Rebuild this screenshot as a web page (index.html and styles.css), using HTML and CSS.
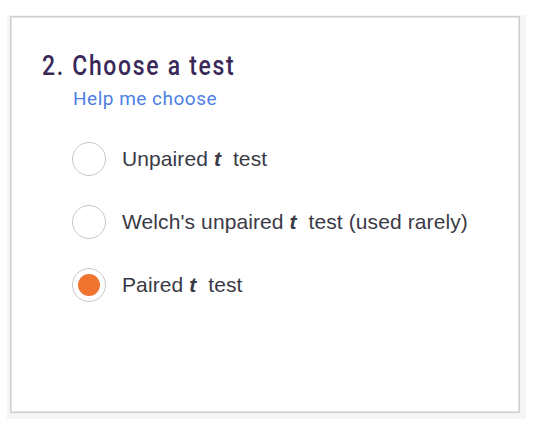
FILE: index.html
```html
<!DOCTYPE html>
<html>
<head>
<meta charset="utf-8">
<title>Choose a test</title>
<link rel="stylesheet" href="styles.css">
</head>
<body>
<div class="frame">
    <div class="card">
        <h2 class="titulo"><span>2. Choose a test</span></h2>
        <a class="ayuda" href="#">Help me choose</a>
        <div class="opciones">
            <label class="opcion">
                <input type="radio" name="test" value="unpaired">
                <span class="circulo"></span>
                <span class="texto">Unpaired <i>t</i>&nbsp; test</span>
            </label>
            <label class="opcion">
                <input type="radio" name="test" value="welch">
                <span class="circulo"></span>
                <span class="texto">Welch's unpaired <i>t</i>&nbsp; test (used rarely)</span>
            </label>
            <label class="opcion">
                <input type="radio" name="test" value="paired" checked>
                <span class="circulo"></span>
                <span class="texto">Paired <i>t</i>&nbsp; test</span>
            </label>
        </div>
    </div>
</div>
</body>
</html>
```

FILE: styles.css
```css
body{
    margin: 0;
    background: #ffffff;
    padding: 15px 12px 5px 7px;
}
.frame{
    background: #f5f5f5;
    padding: 1px 6px 6px 3px;
}
.card{
    background: #ffffff;
    border: 1px solid #cfcfcf;
    box-shadow: inset 0 0 0 1px #e4e4e4;
    height: 397px;
    box-sizing: border-box;
    padding: 34px 30px 0 31px;
}
.titulo{
    margin: 0;
    font-family: Roboto, sans-serif;
    font-weight: 500;
    font-size: 27px;
    letter-spacing: 2px;
    line-height: 30px;
    color: #3a2858;
}
.titulo span{
    display: inline-block;
    transform: scaleX(0.85);
    transform-origin: left center;
    white-space: nowrap;
}
.ayuda{
    display: inline-block;
    margin: 6px 0 0 31px;
    font-family: Roboto, sans-serif;
    font-size: 19px;
    letter-spacing: 0.5px;
    color: #4d7fe3;
    text-decoration: none;
}
.opciones{
    display: flex;
    flex-direction: column;
    gap: 29px;
    margin: 32px 0 0 30px;
}
.opcion{
    display: flex;
    align-items: center;
    gap: 16px;
    font-family: "Liberation Sans", Arial, sans-serif;
    font-size: 21px;
    letter-spacing: 0.1px;
    color: #3a3a46;
    cursor: pointer;
}
.opcion input{
    display: none;
}
.circulo{
    width: 34px;
    height: 34px;
    box-sizing: border-box;
    border: 1.5px solid #c8c8c8;
    border-radius: 50%;
    background: #ffffff;
    display: flex;
    align-items: center;
    justify-content: center;
}
.opcion input:checked + .circulo::after{
    content: "";
    width: 22px;
    height: 22px;
    border-radius: 50%;
    background: #ef7430;
}
.texto i{
    font-style: italic;
    font-weight: bold;
}
```
